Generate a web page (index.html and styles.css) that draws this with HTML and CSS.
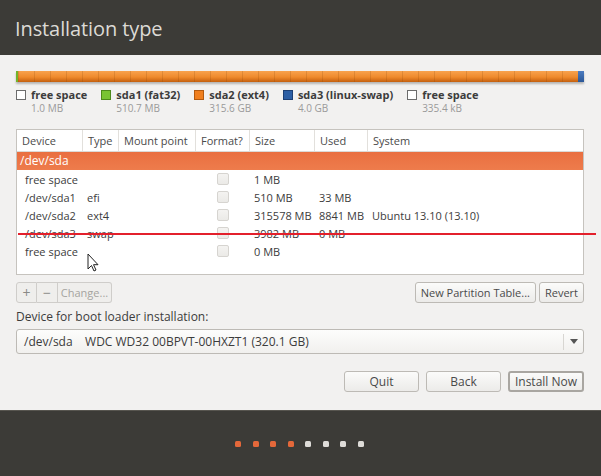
FILE: index.html
```html
<!DOCTYPE html>
<html>
<head>
<meta charset="utf-8">
<link rel="stylesheet" href="styles.css">
</head>
<body>
<div class="window">
  <header class="header"><h1 class="title">Installation type</h1></header>
  <main class="content">
    <div class="partbar">
      <span class="seg seg-fat"></span>
      <span class="seg seg-ext"></span>
      <span class="seg seg-swap"></span>
    </div>
    <ul class="legend">
      <li class="legend-item"><span class="swatch sw-free"></span><div><div class="lg-name">free space</div><div class="lg-size">1.0 MB</div></div></li>
      <li class="legend-item"><span class="swatch sw-fat"></span><div><div class="lg-name">sda1 (fat32)</div><div class="lg-size">510.7 MB</div></div></li>
      <li class="legend-item"><span class="swatch sw-ext"></span><div><div class="lg-name">sda2 (ext4)</div><div class="lg-size">315.6 GB</div></div></li>
      <li class="legend-item"><span class="swatch sw-swap"></span><div><div class="lg-name">sda3 (linux-swap)</div><div class="lg-size">4.0 GB</div></div></li>
      <li class="legend-item"><span class="swatch sw-free"></span><div><div class="lg-name">free space</div><div class="lg-size">335.4 kB</div></div></li>
    </ul>

    <div class="table">
      <div class="row head">
        <div class="cell">Device</div><div class="cell">Type</div><div class="cell">Mount point</div><div class="cell">Format?</div><div class="cell">Size</div><div class="cell">Used</div><div class="cell last">System</div>
      </div>
      <div class="row selected"><div class="cell span">/dev/sda</div></div>
      <div class="row"><div class="cell dev">free space</div><div class="cell"></div><div class="cell"></div><div class="cell chk"><span class="box"></span></div><div class="cell">1 MB</div><div class="cell"></div><div class="cell"></div></div>
      <div class="row"><div class="cell dev">/dev/sda1</div><div class="cell">efi</div><div class="cell"></div><div class="cell chk"><span class="box"></span></div><div class="cell">510 MB</div><div class="cell">33 MB</div><div class="cell"></div></div>
      <div class="row"><div class="cell dev">/dev/sda2</div><div class="cell">ext4</div><div class="cell"></div><div class="cell chk"><span class="box"></span></div><div class="cell">315578 MB</div><div class="cell">8841 MB</div><div class="cell">Ubuntu 13.10 (13.10)</div></div>
      <div class="row"><div class="cell dev">/dev/sda3</div><div class="cell">swap</div><div class="cell"></div><div class="cell chk"><span class="box"></span></div><div class="cell">3982 MB</div><div class="cell">0 MB</div><div class="cell"></div></div>
      <div class="row"><div class="cell dev">free space</div><div class="cell"></div><div class="cell"></div><div class="cell chk"><span class="box"></span></div><div class="cell">0 MB</div><div class="cell"></div><div class="cell"></div></div>
    </div>

    <div class="toolbar">
      <div class="btn-group">
        <button class="btn sq">+</button><button class="btn sq">−</button><button class="btn change">Change...</button>
      </div>
      <div class="right-btns">
        <button class="btn">New Partition Table...</button>
        <button class="btn">Revert</button>
      </div>
    </div>

    <div class="boot-label">Device for boot loader installation:</div>
    <div class="combo">
      <span class="combo-text">/dev/sda&nbsp;&nbsp;&nbsp;&nbsp;WDC WD32 00BPVT-00HXZT1 (320.1 GB)</span>
      <span class="combo-arrow"><svg width="8" height="5" viewBox="0 0 8 5"><path d="M0 0h8L4 5z" fill="#555"/></svg></span>
    </div>

    <div class="actions">
      <button class="btn act">Quit</button>
      <button class="btn act">Back</button>
      <button class="btn act default">Install Now</button>
    </div>
  </main>
  <footer class="footer">
    <span class="dot on"></span><span class="dot on"></span><span class="dot on"></span><span class="dot on"></span>
    <span class="dot"></span><span class="dot"></span><span class="dot"></span><span class="dot"></span>
  </footer>

  <div class="redline"></div>
  <svg class="cursor" width="12" height="19" viewBox="0 0 12 19"><path d="M1 1v15l3.5-3.5 2.5 5.5 2-1-2.5-5.3H11z" fill="#fff" stroke="#222" stroke-width="1" stroke-linejoin="round"/></svg>
</div>
</body>
</html>
```
FILE: styles.css
```css
* { box-sizing: border-box; }
html, body { margin: 0; padding: 0; }
body {
  width: 601px; height: 476px; overflow: hidden;
  font-family: "Open Sans", "Noto Sans", sans-serif;
  background: #f2f1f0;
  color: #3c3c3c;
}
.window { position: relative; width: 601px; height: 476px; display: flex; flex-direction: column; }
.header { height: 55px; flex: none; background: #3c3b37; padding-left: 15px; display: flex; align-items: center; }
.title { margin: 0; font-weight: 400; font-size: 20px; color: #dcdad5; letter-spacing: -0.1px; padding-top: 1px; }

.content { flex: 1; padding: 16px 17px 0 16px; overflow: hidden; }

.partbar {
  height: 11px; display: flex;
  box-shadow: 0 2px 2px rgba(0,0,0,0.25);
}
.seg { display: block; height: 100%; }
.seg-fat { width: 2px; background: #73b42a; }
.seg-ext {
  flex: 1;
  background:
    repeating-linear-gradient(90deg, rgba(120,60,0,0.18) 0 1px, transparent 1px 16px),
    linear-gradient(#f8a24e, #ef8a2c 55%, #c4600f);
}
.seg-swap { width: 6px; background: linear-gradient(#4d7cc0, #2b5797); }

.legend { list-style: none; margin: 5px 0 0; padding: 0; display: flex; gap: 14px; }
.legend-item { display: flex; align-items: flex-start; gap: 5px; }
.swatch { width: 10px; height: 10px; margin-top: 3px; border: 1px solid #777; }
.sw-free { background: #fff; border-color: #6c6c6c; }
.sw-fat { background: #79c433; border-color: #4d8a1b; }
.sw-ext { background: #f07f1e; border-color: #b35a0f; }
.sw-swap { background: #2d5fa5; border-color: #1d3f74; }
.lg-name { font-size: 11px; font-weight: 700; color: #3c3c3c; line-height: 15px; }
.lg-size { font-size: 10px; color: #9a9a9a; line-height: 13px; }

.table {
  margin-top: 14px; height: 146px; background: #fff;
  border: 1px solid #c6c3be;
}
.row {
  display: grid;
  grid-template-columns: 66px 36px 77px 54px 65px 53px 1fr;
  height: 18px; align-items: center;
  font-size: 11px; color: #3c3c3c;
}
.row.head { height: 22px; border-bottom: 1px solid #dcdad6; }
.row.head .cell { border-right: 1px solid #e2e0dc; padding-left: 5px; height: 100%; display: flex; align-items: center; color: #4a4a4a; }
.row.head .cell.last { border-right: 0; }
.row .cell { padding-left: 4px; white-space: nowrap; }
.row .cell.dev { padding-left: 8px; }
.row.selected {
  display: block; height: 18px; line-height: 18px;
  background: linear-gradient(#e96f40, #ee7c4c);
  color: #fff;
}
.row.selected .cell { padding-left: 3px; font-size: 12px; }
.cell.chk { display: flex; justify-content: center; padding-left: 0; }
.box {
  width: 12px; height: 12px; border: 1px solid #d6d4d0; border-radius: 2px;
  background: linear-gradient(#f4f3f1, #ebeae7);
}

.toolbar { margin-top: 7px; display: flex; justify-content: space-between; }
.btn {
  font-family: inherit; font-size: 11px; color: #4a4a4a;
  height: 21px; padding: 0 5px; white-space: nowrap;
  border: 1px solid #bdbab5; border-radius: 3px;
  background: linear-gradient(#fbfbfa, #ecebe9);
  line-height: 19px;
}
.btn-group { display: flex; }
.btn-group .btn { border-radius: 0; color: #a5a4a0; background: #efeeec; border-color: #cfcdca; }
.btn-group .btn + .btn { border-left: 0; }
.btn-group .btn:first-child { border-radius: 3px 0 0 3px; }
.btn-group .btn:last-child { border-radius: 0 3px 3px 0; }
.btn.sq { width: 21px; padding: 0; font-size: 14px; color: #8a8a86; }
.btn.change { width: 54px; padding: 0; }
.right-btns { display: flex; gap: 3px; }

.boot-label { margin-top: 6px; font-size: 12px; color: #3c3c3c; line-height: 16px; }
.combo {
  margin-top: 4px; height: 25px; display: flex; align-items: center;
  border: 1px solid #bdbab5; border-radius: 3px;
  background: linear-gradient(#fdfdfc, #f1f0ee);
  font-size: 12px; color: #3c3c3c;
}
.combo-text { flex: 1; padding-left: 7px; }
.combo-arrow { width: 20px; height: 16px; border-left: 1px solid #d8d6d2; display: flex; align-items: center; justify-content: center; }

.actions { margin-top: 17px; display: flex; justify-content: flex-end; gap: 7px; }
.btn.act { width: 75px; font-size: 12px; height: 21px; padding: 0; }
.btn.default { width: 76px; border: 2px solid #a9a6a1; line-height: 17px; }

.footer {
  height: 66px; flex: none; background: #3c3b37; border-top: 1px solid #57554f;
  display: flex; justify-content: center; align-items: center; gap: 11.5px;
  padding-right: 2px;
}
.dot { width: 6px; height: 6px; border-radius: 1.5px; background: #dedcd8; }
.dot.on { background: #e4683a; }

.redline { position: absolute; left: 18px; top: 233px; width: 578px; height: 2px; background: #e3202c; }
.cursor { position: absolute; left: 87px; top: 253px; }
```
